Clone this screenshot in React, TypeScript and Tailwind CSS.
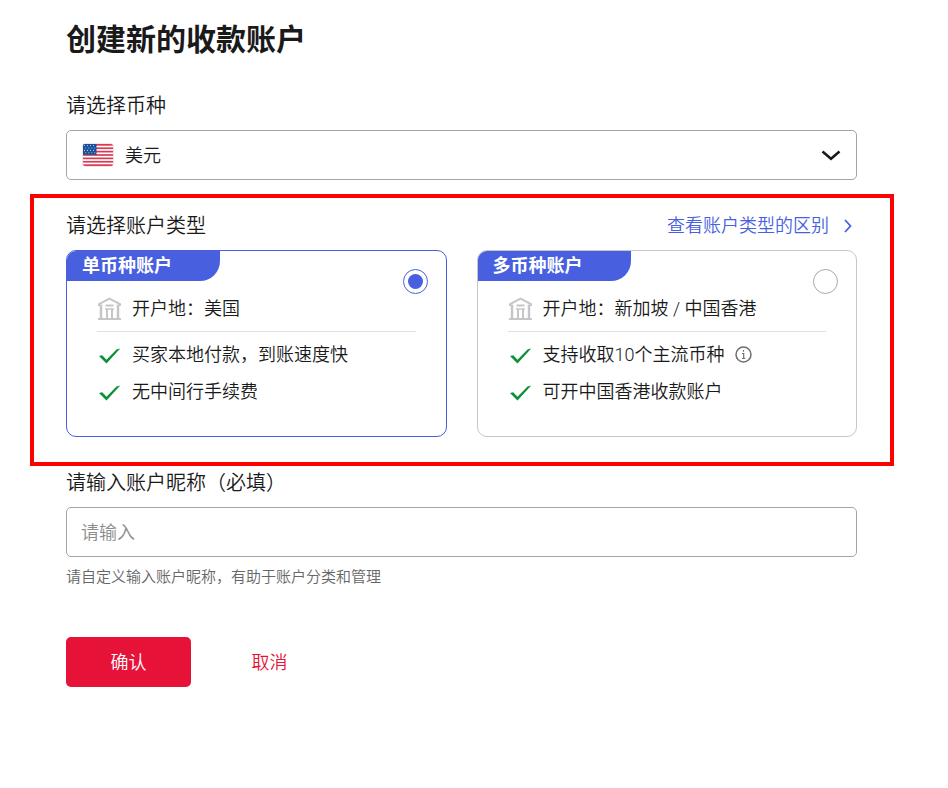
import { useState } from "react";

interface AccountType {
  id:       string;
  title:    string;
  location: string;
  benefits: { text: string; info?: boolean }[];
}

const accountTypes: AccountType[] = [
  {
    id:       "single",
    title:    "单币种账户",
    location: "开户地：美国",
    benefits: [{ text: "买家本地付款，到账速度快" }, { text: "无中间行手续费" }],
  },
  {
    id:       "multi",
    title:    "多币种账户",
    location: "开户地：新加坡 / 中国香港",
    benefits: [{ text: "支持收取10个主流币种", info: true }, { text: "可开中国香港收款账户" }],
  },
];

const stripes = [0, 1, 2, 3, 4, 5, 6];
const starRows = [2.2, 4.6, 7, 9.4];
const starCols = [2.5, 5.5, 8.5, 11.5];

function FlagUS() {
  return (
    <svg width="32" height="24" viewBox="0 0 32 24" aria-hidden="true">
      <defs>
        <clipPath id="flag">
          <rect x="1" y="1" width="30" height="22" rx="2" />
        </clipPath>
      </defs>
      <rect x="0.5" y="0.5" width="31" height="23" rx="2.5" fill="#fff" stroke="#efe6e6" />
      <g clipPath="url(#flag)">
        {stripes.map((s) => (
          <rect key={s} x="1" y={1 + s * 3.38} width="30" height="1.7" fill="#dc3a53" />
        ))}
        <rect x="1" y="1" width="13.500" height="10.800" fill="#17509b" />
        {starRows.map((y, i) =>
          starCols.map((x) => (
            <circle key={`${x}-${y}`} cx={x + (i % 2) * 1.3} cy={y + 0.4} r="0.55" fill="#c4d6ec" />
          ))
        )}
      </g>
    </svg>
  );
}

function BankIcon() {
  return (
    <svg width="24" height="24" viewBox="0 0 24 24" fill="none" stroke="#c6c6c6" strokeWidth="2" className="shrink-0" aria-hidden="true">
      <path d="M2 9V7L12.500 1.700L23 7V9" />
      <path d="M4 7.500V22M21 7.500V22" strokeWidth="2.500" />
      <path d="M8.500 8.500H16.500M10 12V22M15 12V22M1 22H24" />
      <path d="M8 12H17" strokeWidth="1.500" />
    </svg>
  );
}

function CheckIcon() {
  return (
    <svg width="24" height="24" viewBox="0 0 24 24" className="shrink-0" aria-hidden="true">
      <path d="M2 13L5.200 12.300L9.500 16.800L19.500 6.500L23.200 5.500L9.500 20.500Z" fill="#089235" />
    </svg>
  );
}

function InfoIcon() {
  return (
    <svg width="17" height="17" viewBox="0 0 17 17" fill="none" stroke="#6f6f6f" strokeWidth="1.500" aria-hidden="true">
      <circle cx="8.500" cy="8.500" r="7.500" />
      <path d="M8.500 4V5.700M7 7.500H8.700V12.500M7 12.500H10.300" strokeWidth="1.200" />
    </svg>
  );
}

function AccountCard({ account, checked, onSelect }: { account: AccountType; checked: boolean; onSelect: () => void }) {
  return (
    <label
      className={`block overflow-hidden rounded-[10px] border cursor-pointer ${checked ? "border-[#485fdf]" : "border-[#c6c6c6]"}`}
    >
      {/* Badge + radio */}
      <div className="flex h-[30px] items-start justify-between">
        <span className="h-[30px] w-[153px] rounded-br-[20px] bg-[#485fdf] pl-[15px] text-[18px] leading-[30px] font-bold text-white">
          {account.title}
        </span>
        <input
          type="radio"
          name="accountType"
          value={account.id}
          checked={checked}
          onChange={onSelect}
          className="mt-[18px] mr-[18px] size-[25px] shrink-0 appearance-none rounded-full border border-[#a8a8a8] bg-white bg-clip-content p-1 checked:border-[#485fdf] checked:bg-[#485fdf]"
        />
      </div>

      <div className="px-[30px] pb-[26px]">
        <div className="flex items-center gap-[11px] border-b border-[#e1e1e1] pt-[14px] pb-2 leading-7">
          <BankIcon />
          <span>{account.location}</span>
        </div>
        <ul className="pt-1">
          {account.benefits.map((b) => (
            <li key={b.text} className="flex h-[37px] items-center gap-[11px]">
              <CheckIcon />
              <span>{b.text}</span>
              {b.info && <InfoIcon />}
            </li>
          ))}
        </ul>
      </div>
    </label>
  );
}

export default function App() {
  const [selected, setSelected] = useState("single");

  return (
    <main className="min-h-screen bg-white pt-5 pr-[54px] pb-12 pl-[30px] font-[Roboto,'Noto_Sans_CJK_SC',sans-serif] text-[18px] font-[350] text-[#1a1a1a]">
      <form onSubmit={(e) => e.preventDefault()}>
        {/* Currency */}
        <div className="pr-[37px] pl-9">
          <h1 className="text-[30px] leading-10 font-bold">创建新的收款账户</h1>
          <label htmlFor="currency" className="mt-[30px] block text-[20px] leading-8">
            请选择币种
          </label>
          <div className="relative mt-2">
            <select
              id="currency"
              className="block h-[50px] w-full appearance-none rounded-[5px] border border-[#a5a5a5] bg-white pl-[58px]"
            >
              <option>美元</option>
            </select>
            <span className="pointer-events-none absolute inset-y-0 left-4 flex items-center">
              <FlagUS />
            </span>
            <svg
              className="pointer-events-none absolute inset-y-0 right-4 my-auto"
              width="20"
              height="12"
              viewBox="0 0 20 12"
              fill="none"
              stroke="#1a1a1a"
              strokeWidth="2.500"
              aria-hidden="true"
            >
              <path d="M1.500 2.500L10 9.800L18.500 2.500" />
            </svg>
          </div>
        </div>

        {/* Account type */}
        <section className="mt-[14px] border-4 border-[#ff0000] pt-3 pr-[33px] pb-[25px] pl-8">
          <div className="flex items-center justify-between leading-8">
            <h2 className="text-[20px]">请选择账户类型</h2>
            <a href="#types" className="flex items-center gap-[15px] pr-[5px] text-[#485fdf]">
              查看账户类型的区别
              <svg width="8" height="14" viewBox="0 0 8 14" fill="none" stroke="#485fdf" strokeWidth="1.800" aria-hidden="true">
                <path d="M1 1L6.500 7L1 13" />
              </svg>
            </a>
          </div>
          <div className="mt-2 grid grid-cols-2 gap-[30px]">
            {accountTypes.map((a) => (
              <AccountCard key={a.id} account={a} checked={selected === a.id} onSelect={() => setSelected(a.id)} />
            ))}
          </div>
        </section>

        {/* Nickname */}
        <div className="pt-px pr-[37px] pl-9">
          <label htmlFor="nickname" className="block text-[20px] leading-8">
            请输入账户昵称（必填）
          </label>
          <input
            id="nickname"
            type="text"
            placeholder="请输入"
            className="mt-2 block h-[50px] w-full rounded-[5px] border border-[#a5a5a5] px-[14px] placeholder:text-[#8c8c8c]"
          />
          <p className="mt-[10px] text-[15px] leading-5 text-[#666666]">请自定义输入账户昵称，有助于账户分类和管理</p>

          <div className="mt-[50px] flex">
            <button type="submit" className="h-[50px] w-[125px] rounded-[5px] bg-[#e61238] text-white">
              确认
            </button>
            <button type="button" className="ml-4 h-[50px] w-[125px] text-[#e61238]">
              取消
            </button>
          </div>
        </div>
      </form>
    </main>
  );
}
